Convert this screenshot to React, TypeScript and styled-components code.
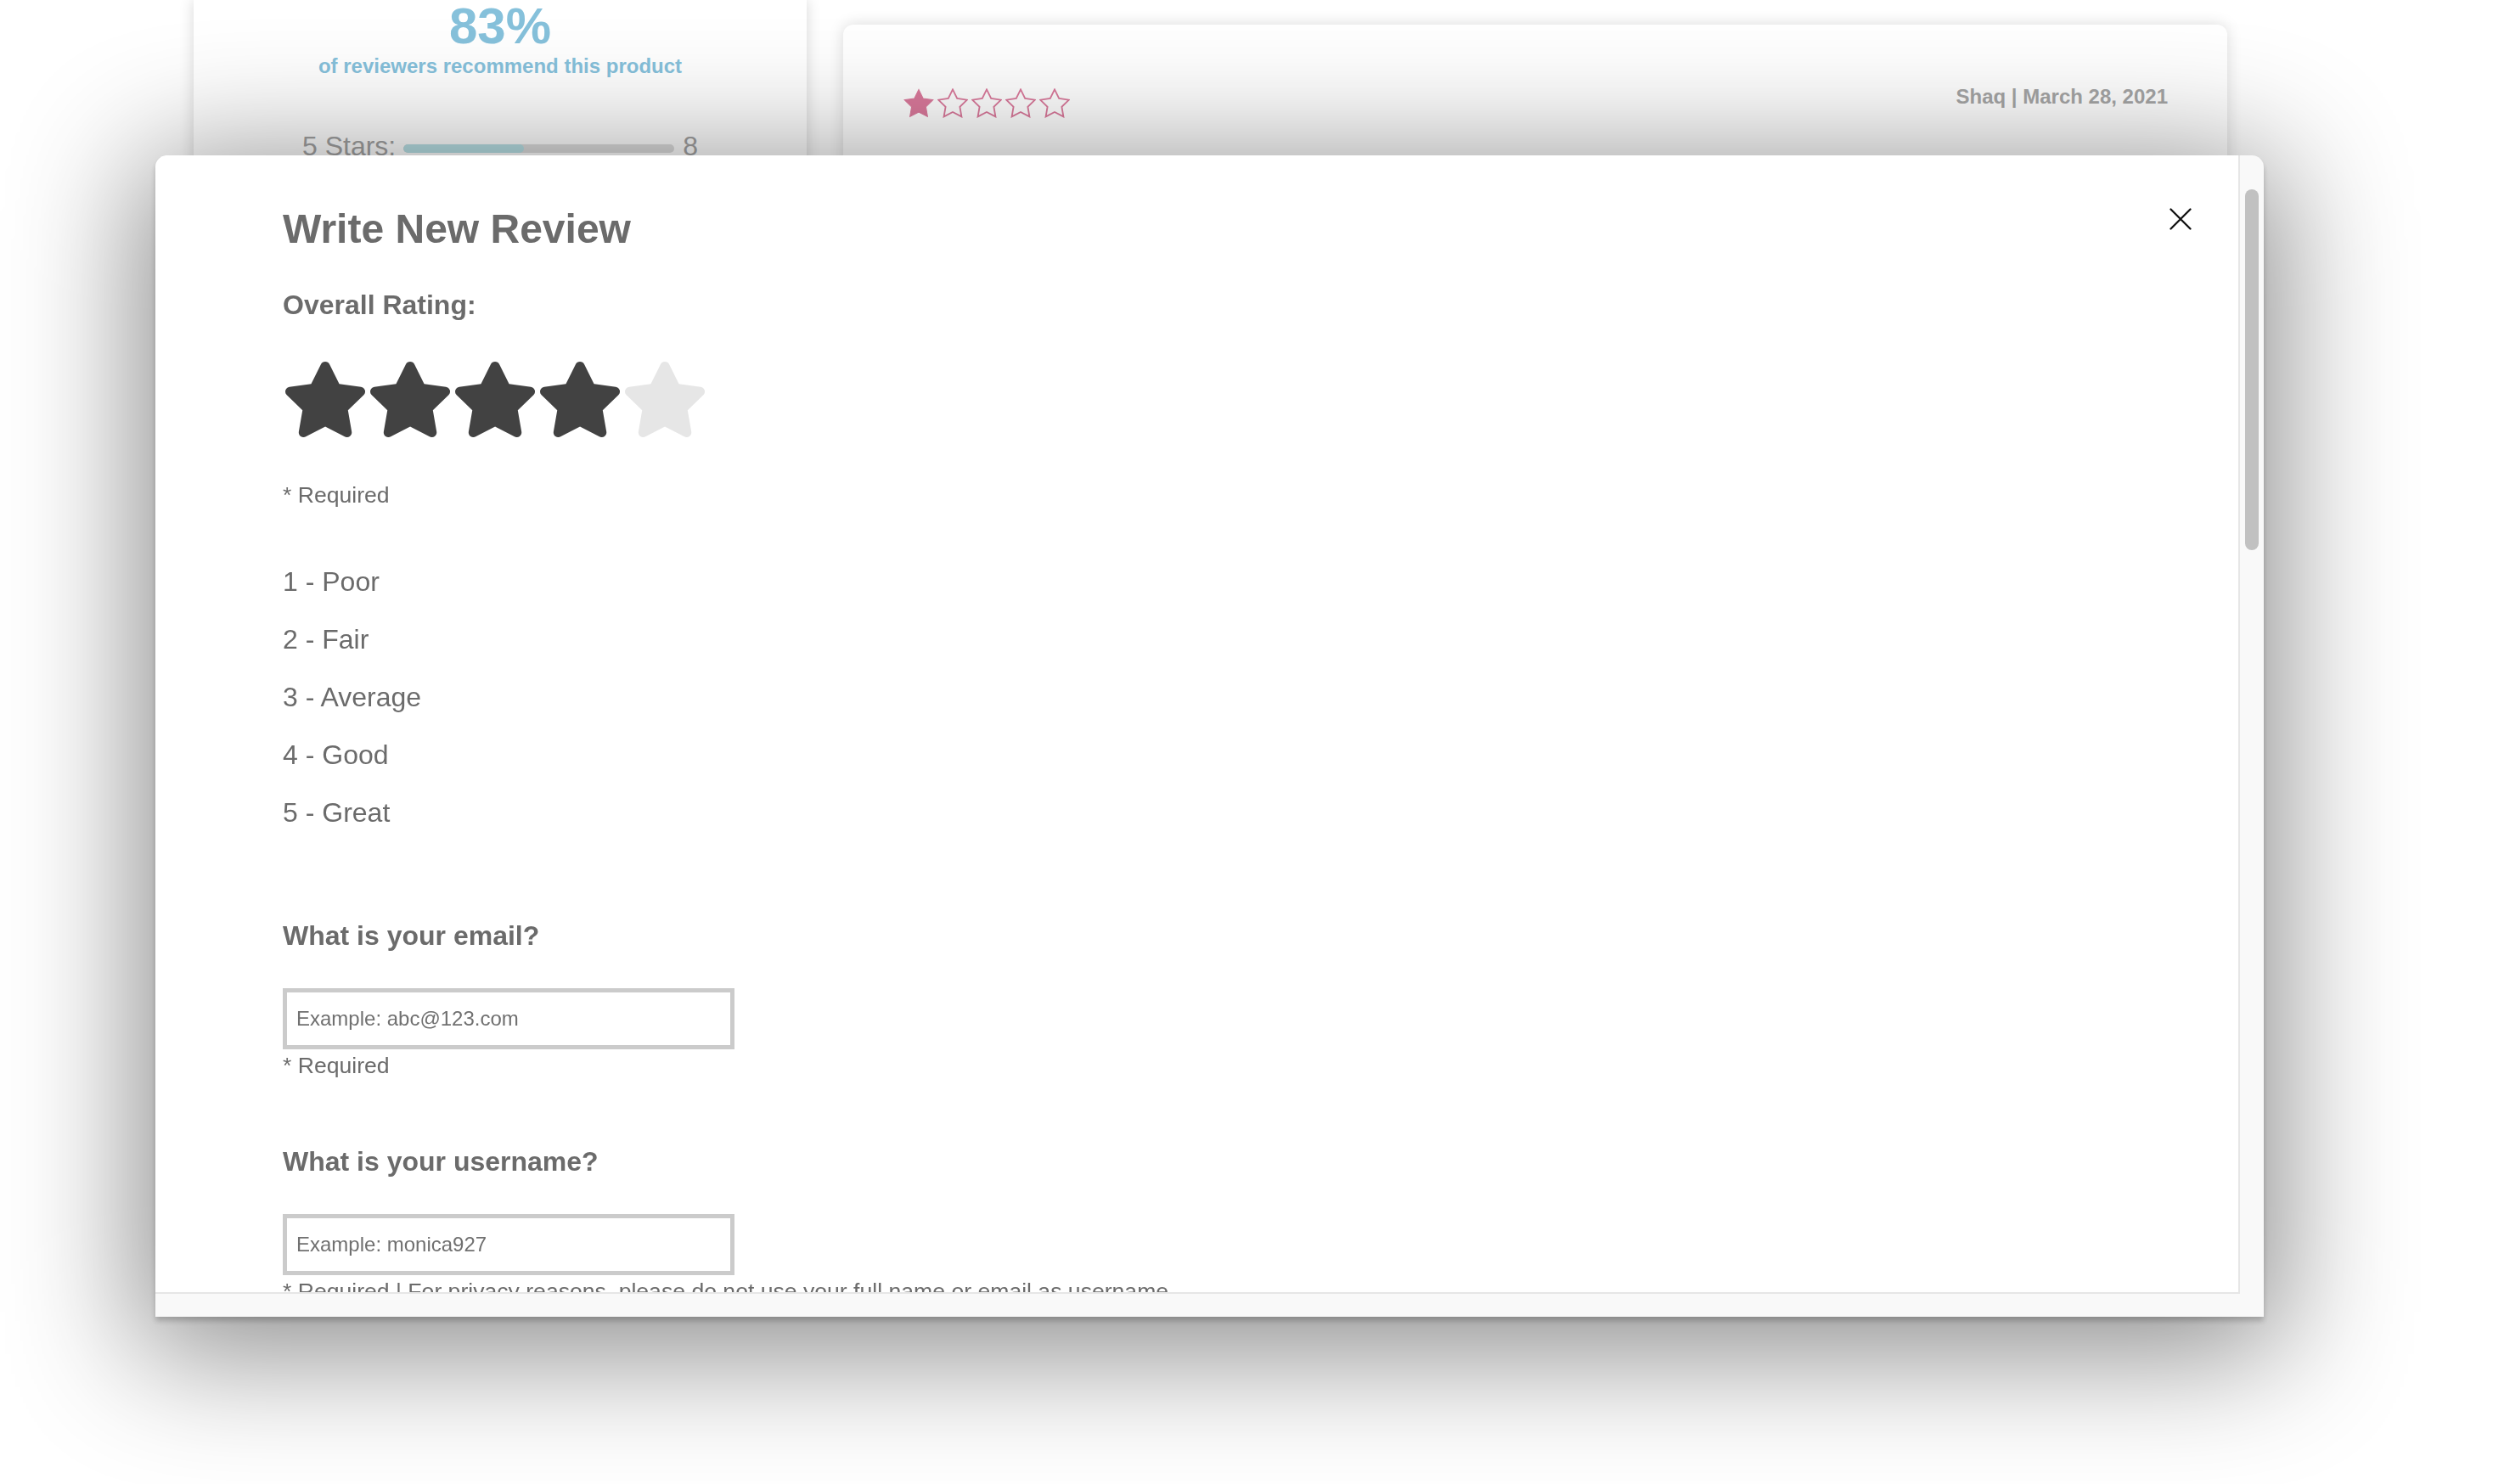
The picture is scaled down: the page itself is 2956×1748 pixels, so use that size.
import React from "react";
import styled, { createGlobalStyle } from "styled-components";

const GlobalStyle = createGlobalStyle`
  html, body { margin: 0; padding: 0; background: #ffffff; }
  body {
    font-family: "Liberation Sans", Arial, Helvetica, sans-serif;
    overflow: hidden;
  }
  * { box-sizing: border-box; }
`;

/* ---------- page behind the modal ---------- */

const Page = styled.div`
  display: flex;
  align-items: flex-start;
  gap: 43px;
  padding-left: 228px;
  height: 1748px;
  overflow: hidden;
`;

const SummaryCard = styled.section`
  width: 722px;
  height: 900px;
  background: #ffffff;
  box-shadow: 0 0 16px rgba(0, 0, 0, 0.16);
  display: flex;
  flex-direction: column;
  align-items: center;
  padding-top: 1px;
`;

const Percent = styled.div`
  font-size: 60px;
  line-height: 60px;
  font-weight: 700;
  color: #86c1db;
`;

const RecommendText = styled.div`
  margin-top: 3px;
  font-size: 24px;
  line-height: 27.6px;
  font-weight: 700;
  color: #86c1db;
`;

const BreakdownRow = styled.div`
  margin-top: 62px;
  display: flex;
  align-items: center;
  font-size: 32px;
  line-height: 36.8px;
  color: #a3a3a3;
`;

const BarTrack = styled.div`
  width: 319px;
  height: 10px;
  margin: 6px 10px 0 9px;
  border-radius: 5px;
  background: #dedede;
  overflow: hidden;
`;

const BarFill = styled.div`
  height: 100%;
  border-radius: 5px;
  background: #b9e1e6;
`;

const ReviewCard = styled.article`
  margin-top: 29px;
  width: 1630px;
  height: 700px;
  background: #ffffff;
  border-radius: 12px;
  box-shadow: 0 0 18px rgba(0, 0, 0, 0.14);
  padding: 71px 70px 0 71px;
`;

const ReviewHeader = styled.div`
  display: flex;
  justify-content: space-between;
  align-items: flex-start;
`;

const PinkStars = styled.div`
  display: flex;
  gap: 4px;
  margin-top: 4px;
`;

const ReviewMeta = styled.div`
  font-size: 24px;
  line-height: 27.6px;
  font-weight: 700;
  color: #a6a6a6;
`;

/* ---------- modal ---------- */

const Modal = styled.div`
  position: fixed;
  left: 183px;
  top: 183px;
  width: 2483px;
  height: 1368px;
  display: flex;
  flex-direction: column;
  background: #f9f9f9;
  border-radius: 14px 14px 0 0;
  overflow: hidden;
  box-shadow: 0 24px 150px 20px rgba(0, 0, 0, 0.45),
    0 5px 6px rgba(0, 0, 0, 0.2);
`;

const ModalBody = styled.div`
  flex: 1;
  min-height: 0;
  display: flex;
`;

const ScrollArea = styled.div`
  flex: 1;
  min-width: 0;
  background: #ffffff;
  border-right: 2px solid #e6e6e6;
  border-bottom: 2px solid #e6e6e6;
  border-top-left-radius: 14px;
  overflow: hidden;
  padding: 59px 55px 0 150px;
  color: #6b6b6b;
`;

const ScrollTrack = styled.div`
  width: 28px;
  flex-shrink: 0;
  padding-top: 40px;
  display: flex;
  justify-content: center;
`;

const ScrollThumb = styled.div`
  width: 16px;
  height: 425px;
  border-radius: 8px;
  background: #c1c1c1;
`;

const ModalFooter = styled.div`
  height: 27px;
  flex-shrink: 0;
  background: #f9f9f9;
`;

const Header = styled.div`
  display: flex;
  justify-content: space-between;
  align-items: flex-start;
`;

const Title = styled.h2`
  margin: 0;
  font-size: 48px;
  line-height: 55.2px;
  font-weight: 700;
  color: #6b6b6b;
`;

const CloseButton = styled.button`
  margin-top: 3px;
  width: 26px;
  height: 26px;
  padding: 0;
  border: 0;
  background: none;
  cursor: pointer;
  display: flex;
`;

const SectionLabel = styled.h3<{ $gap: number }>`
  margin: ${(p) => p.$gap}px 0 0;
  font-size: 32px;
  line-height: 36.8px;
  font-weight: 700;
  color: #6b6b6b;
`;

const StarPicker = styled.div`
  margin: 48px 0 0 3px;
  display: flex;
  gap: 6px;
`;

const Note = styled.div<{ $gap: number }>`
  margin-top: ${(p) => p.$gap}px;
  font-size: 26.6px;
  line-height: 29.9px;
  color: #6b6b6b;
  white-space: nowrap;
`;

const RatingList = styled.ul`
  list-style: none;
  margin: 53px 0 0;
  padding: 0;
`;

const RatingItem = styled.li`
  font-size: 32px;
  line-height: 68px;
  color: #6b6b6b;
`;

const TextInput = styled.input`
  display: block;
  margin-top: 43px;
  width: 532px;
  height: 72px;
  padding: 0 11px;
  border: 5px solid #cbcbcb;
  border-radius: 0;
  background: #ffffff;
  font-family: "Liberation Sans", Arial, sans-serif;
  font-size: 24px;
  color: #6b6b6b;
  outline: none;
  &::placeholder {
    color: #707070;
  }
`;

/* ---------- icons ---------- */

const FA_STAR =
  "M316.9 18C311.6 7 300.4 0 288.1 0s-23.4 7-28.8 18L195 150.3 51.4 171.5c-12 1.8-22 10.2-25.7 21.7s-.7 24.2 7.9 32.7L137.8 329 113.2 474.7c-2 12 3 24.2 12.9 31.3s23 8 33.8 2.3l128.3-68.5 128.3 68.5c10.8 5.7 23.9 4.9 33.8-2.3s14.9-19.3 12.9-31.3L438.5 329 542.7 225.9c8.6-8.5 11.7-21.2 7.9-32.7s-13.7-19.9-25.7-21.7L381.2 150.3 316.9 18z";

const BigStar = ({ on }: { on: boolean }) => (
  <svg
    width="94"
    height="89"
    viewBox="24 0 528 512"
    preserveAspectRatio="none"
    aria-hidden="true"
  >
    <path d={FA_STAR} fill={on ? "#424242" : "#e6e6e6"} />
  </svg>
);

const STAR_POINTS =
  "12,2 15.09,8.26 22,9.27 17,14.14 18.18,21.02 12,17.77 5.82,21.02 7,14.14 2,9.27 8.91,8.26";

const SmallStar = ({ filled }: { filled: boolean }) => (
  <svg width="36" height="35" viewBox="1.3 1.3 21.4 20.5" aria-hidden="true">
    <polygon
      points={STAR_POINTS}
      fill={filled ? "#db7a9c" : "none"}
      stroke="#db7a9c"
      strokeWidth={filled ? 0.6 : 1.1}
      strokeLinejoin="miter"
    />
  </svg>
);

const CloseIcon = () => (
  <svg width="26" height="26" viewBox="0 0 26 26" aria-hidden="true">
    <path
      d="M1.5 1.5 24.5 24.5 M24.5 1.5 1.5 24.5"
      stroke="#111111"
      strokeWidth="2.3"
      strokeLinecap="round"
    />
  </svg>
);

/* ---------- app ---------- */

const ratingLabels = ["1 - Poor", "2 - Fair", "3 - Average", "4 - Good", "5 - Great"];

export default function App() {
  const fiveStarCount = 8;
  const totalReviews = 18;
  const selectedRating = 4;
  const reviewRating = 1;

  return (
    <>
      <GlobalStyle />
      <Page>
        <SummaryCard>
          <Percent>83%</Percent>
          <RecommendText>of reviewers recommend this product</RecommendText>
          <BreakdownRow>
            <span>5 Stars:</span>
            <BarTrack>
              <BarFill style={{ width: `${(fiveStarCount / totalReviews) * 100}%` }} />
            </BarTrack>
            <span>{fiveStarCount}</span>
          </BreakdownRow>
        </SummaryCard>
        <ReviewCard>
          <ReviewHeader>
            <PinkStars>
              {[1, 2, 3, 4, 5].map((n) => (
                <SmallStar key={n} filled={n <= reviewRating} />
              ))}
            </PinkStars>
            <ReviewMeta>Shaq | March 28, 2021</ReviewMeta>
          </ReviewHeader>
        </ReviewCard>
      </Page>

      <Modal role="dialog" aria-label="Write New Review">
        <ModalBody>
          <ScrollArea>
            <Header>
              <Title>Write New Review</Title>
              <CloseButton aria-label="Close">
                <CloseIcon />
              </CloseButton>
            </Header>

            <SectionLabel $gap={43.5}>Overall Rating:</SectionLabel>
            <StarPicker>
              {[1, 2, 3, 4, 5].map((n) => (
                <BigStar key={n} on={n <= selectedRating} />
              ))}
            </StarPicker>
            <Note $gap={54}>* Required</Note>

            <RatingList>
              {ratingLabels.map((l) => (
                <RatingItem key={l}>{l}</RatingItem>
              ))}
            </RatingList>

            <SectionLabel $gap={92.5}>What is your email?</SectionLabel>
            <TextInput type="email" placeholder="Example: abc@123.com" />
            <Note $gap={5}>* Required</Note>

            <SectionLabel $gap={79.5}>What is your username?</SectionLabel>
            <TextInput type="text" placeholder="Example: monica927" />
            <Note $gap={5}>
              * Required | For privacy reasons, please do not use your full name or email as username
            </Note>
          </ScrollArea>
          <ScrollTrack>
            <ScrollThumb />
          </ScrollTrack>
        </ModalBody>
        <ModalFooter />
      </Modal>
    </>
  );
}
